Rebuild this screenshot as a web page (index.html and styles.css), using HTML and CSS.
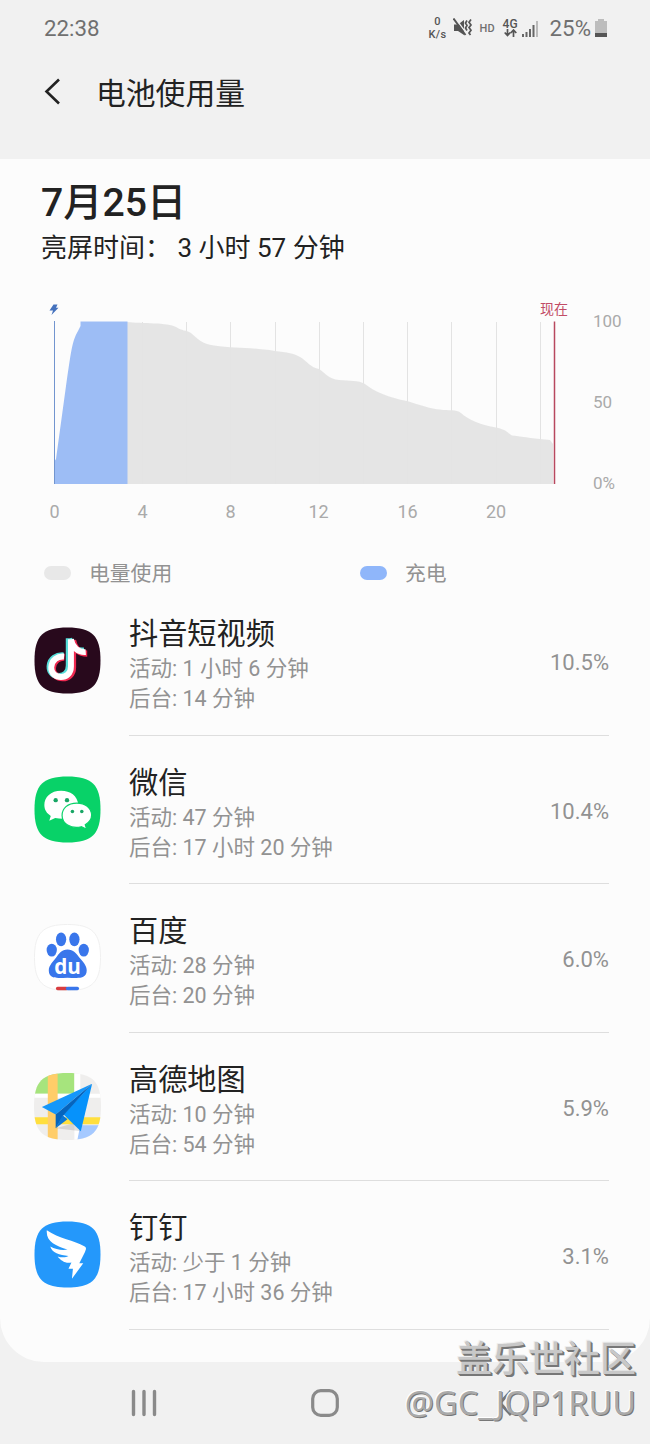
FILE: index.html
```html
<!DOCTYPE html>
<html lang="zh-CN">
<head>
<meta charset="utf-8">
<title>电池使用量</title>
<link rel="stylesheet" href="styles.css">
</head>
<body>
<div class="phone">
  <header class="statusbar">
    <span class="clock">22:38</span>
    <div class="indicators">
      <span class="speed"><b>0</b><b>K/s</b></span>
      <svg class="mute" width="20" height="20" viewBox="0 0 20 20">
        <path d="M1 6.500h4L11 2v15l-6-4H1z" fill="#555"/>
        <path d="M2.500 .5l11 15" stroke="#f1f1f1" stroke-width="1.300"/>
        <path d="M.5 .5l12 16.500" stroke="#555" stroke-width="1.900"/>
        <path d="M14 2.500l-1.500 2.500 1.500 2.500-1.500 2.500 1.500 2.500M18 1.500l-2 2.700 2 2.700-2 2.700 2 2.700-2 2.700 1.500 2" fill="none" stroke="#555" stroke-width="1.700"/>
      </svg>
      <span class="hd">HD</span>
      <span class="net"><b>4G</b>
        <svg width="13" height="8" viewBox="0 0 13 8"><path d="M3.500 0v6M.7 3.500l2.800 3 2.800-3M9.500 8V1.500M6.700 4l2.800-3 2.800 3" fill="none" stroke="#555" stroke-width="1.700"/></svg>
      </span>
      <svg class="signal" width="17" height="17" viewBox="0 0 17 17"><path d="M0 14h2v3H0zM3.500 12h2v5h-2zM7 9h2v8H7zM10.500 5h2v12h-2z" fill="#666"/><path d="M14 1h2v16h-2z" fill="#bbb"/></svg>
      <span class="level">25%</span>
      <svg class="battery" width="12" height="18" viewBox="0 0 12 18"><path d="M3 0h6v2h3v12H0V2h3z" fill="#bdbdbd"/><path d="M0 14h12v4H0z" fill="#555"/></svg>
    </div>
  </header>
  <div class="titlebar">
    <svg width="18" height="28" viewBox="0 0 18 28"><path d="M15 1.500L2.500 13.500l12.500 12" fill="none" stroke="#222" stroke-width="2.600"/></svg>
    <h1>电池使用量</h1>
  </div>
  <main class="sheet">
    <section class="summary">
      <h2>7月25日</h2>
      <p>亮屏时间： 3 小时 57 分钟</p>
    </section>
    <svg class="chart" width="650" height="240" viewBox="0 290 650 240">
      <path class="grid" d="M142.500 322V484M186.500 322V484M230.500 322V484M275.500 322V484M319.500 322V484M363.500 322V484M407.500 322V484M451.500 322V484M496.500 322V484M540.500 322V484"/>
      <path class="usage" d="M127 484V322C142 323.500 168 322.500 176 327C182 331 186 330 191 333C198 339 202 344 214 345.500C235 348.500 250 347 275 351C286 352 296 354 300 357C307 361 311 368 319 369C325 373 329 379 339 380C350 381 358 380 365 384C373 391 390 398 407 401C420 405 431 409 440 409.500C449 411 456 409 461 413C468 420 482 425 496 427.500C508 430 507 433 512 435.500C525 437 536 439 550 440L553 444V484z"/>
      <path class="charge" d="M54 484V462L56 459L66 386C71 352 72 341 78 331L80.500 326V321.500H127.500V484z"/>
      <path class="start" d="M54.500 321V484"/>
      <path class="current" d="M554.500 321.500V484"/>
      <path d="M53.500 304.500h4l-1.500 3.200h2.500L51.500 315l1.500-4.500h-3.500z" fill="#4572bd"/>
      <text class="now" x="554" y="313.500">现在</text>
      <g class="xaxis">
        <text x="54.500" y="518">0</text><text x="142.500" y="518">4</text><text x="230.500" y="518">8</text><text x="318.500" y="518">12</text><text x="407.500" y="518">16</text><text x="496" y="518">20</text>
      </g>
      <g class="yaxis">
        <text x="593" y="327">100</text><text x="593" y="408">50</text><text x="593" y="489">0%</text>
      </g>
    </svg>
    <div class="legend">
      <span class="key"><i class="pill"></i>电量使用</span>
      <span class="key"><i class="pill blue"></i>充电</span>
    </div>
    <ul class="apps">
      <li>
        <svg class="icon" viewBox="0 0 68 68">
          <path d="M34 0.500C59 .5 67.500 9 67.500 34S59 67.500 34 67.500 .5 59 .5 34 9 .5 34 .5z" fill="#28091c"/>
          <g fill="none" stroke-width="6.500">
            <path d="M35.500 11.500V39C35.500 54 15.500 52.500 16 40C16.500 32 23 28.500 30 29M35.500 11.500C37 20 43 25 51 24" stroke="#55ddd9"/>
            <path d="M39.500 13.500V41C39.500 56 18.500 54.500 19 42C19.500 34 26 30.500 31 31M39.500 13.500C41 22 46 27 54 27" stroke="#ef2950"/>
            <path d="M37.500 12.500V40C37.500 55 17 53.500 17.500 41C18 33 24 29.500 30.500 30M37.500 12.500C39 21 45 26 52.500 25.500" stroke="#fff" stroke-width="6"/>
          </g>
        </svg>
        <div class="info"><h3>抖音短视频</h3><p>活动: 1 小时 6 分钟</p><p>后台: 14 分钟</p></div><span class="pct">10.5%</span>
      </li>
      <li>
        <svg class="icon" viewBox="0 0 68 68">
          <path d="M34 0.500C59 .5 67.500 9 67.500 34S59 67.500 34 67.500 .5 59 .5 34 9 .5 34 .5z" fill="#08d268"/>
          <path d="M27.500 15C17 15 10.500 21.500 10.500 29.500C10.500 34.500 13 38 17 40.500L15.500 45.500L21.500 42.500C39 46 45.500 37 45 29C44 20 37 15 27.500 15z" fill="#fff"/>
          <path d="M43.500 27.500C34 27.500 28.500 33 28.500 40C28.500 48 37 54 48 51.500L53.500 54L52 49.500C56 47 58.500 44 58.500 39.500C58 32 52 27.500 43.500 27.500z" fill="#fff" stroke="#08d268" stroke-width="1.200"/>
          <g fill="#18a665"><circle cx="22" cy="24.500" r="2.200"/><circle cx="33.500" cy="24.500" r="2.200"/><circle cx="39" cy="36" r="1.800"/><circle cx="48.500" cy="36" r="1.800"/></g>
        </svg>
        <div class="info"><h3>微信</h3><p>活动: 47 分钟</p><p>后台: 17 小时 20 分钟</p></div><span class="pct">10.4%</span>
      </li>
      <li>
        <svg class="icon" viewBox="0 0 68 68">
          <path d="M34 0.500C59 .5 67.500 9 67.500 34S59 67.500 34 67.500 .5 59 .5 34 9 .5 34 .5z" fill="#fff" stroke="#f0f0f0"/>
          <g fill="#3976eb"><ellipse cx="18" cy="26.500" rx="5.200" ry="6.500"/><ellipse cx="27.500" cy="15.500" rx="5.200" ry="7"/><ellipse cx="41" cy="15.500" rx="5.200" ry="7"/><ellipse cx="50.500" cy="26.500" rx="5.200" ry="6.500"/>
          <path d="M34 26C40 26 43 30 46 34C49.500 38 53.500 42 53.500 47C53.500 57 43 54.500 34 54.500S15 57 15 47C15 42 19.500 38 22.500 34C25.500 30 28 26 34 26z"/></g>
          <text x="34" y="51" class="du">du</text>
          <path d="M24 65.500H33" stroke="#d83d40" stroke-width="3.500" stroke-linecap="round"/><path d="M34 65.500H44" stroke="#3976eb" stroke-width="3.500" stroke-linecap="round"/>
        </svg>
        <div class="info"><h3>百度</h3><p>活动: 28 分钟</p><p>后台: 20 分钟</p></div><span class="pct">6.0%</span>
      </li>
      <li>
        <svg class="icon" viewBox="0 0 68 68">
          <defs><clipPath id="tile"><path d="M34 0C59.500 0 68 8.500 68 34S59.500 68 34 68 0 59.500 0 34 8.500 0 34 0z"/></clipPath></defs>
          <g clip-path="url(#tile)">
            <path d="M0 0h68v68H0z" fill="#efeeed"/><path d="M0 0h41v21H0z" fill="#a6e47d"/>
            <path d="M41 0h6v68h-6zM0 21h68v4H0z" fill="#fff"/>
            <path d="M47 53h21v15H44z" fill="#a5c9ff"/>
            <path d="M0 45h68v7H0z" fill="#ffdf3e"/><path d="M14 0h10v68H14z" fill="#ffcd69"/>
            <path d="M22 56L44 50L48 59z" fill="#777" opacity=".22"/>
          </g>
          <path d="M59 11L8 34.500L22 42L59 11z" fill="#1597fa"/><path d="M59 11L30 42L47.500 59z" fill="#0692fb"/><path d="M59 11L22 42V56L30 43z" fill="#0564bd"/><path d="M22 56L34 47L29 43z" fill="#0876d6"/>
        </svg>
        <div class="info"><h3>高德地图</h3><p>活动: 10 分钟</p><p>后台: 54 分钟</p></div><span class="pct">5.9%</span>
      </li>
      <li>
        <svg class="icon" viewBox="0 0 68 68">
          <path d="M34 0.500C59 .5 67.500 9 67.500 34S59 67.500 34 67.500 .5 59 .5 34 9 .5 34 .5z" fill="#2498fb"/>
          <path d="M13 9.500C25 18 41 20 51 25.500C54 27 52.500 29 51.500 32L46 43H50L38.500 58.500L39.500 48.500H35L38 42C32 43.500 27 40 24 36C28 37.500 33 37 35 35.500C26 35 18 32 16.500 26C22 29.500 30 30 34 29C22 25 12 21 13 9.500z" fill="#fff"/>
        </svg>
        <div class="info"><h3>钉钉</h3><p>活动: 少于 1 分钟</p><p>后台: 17 小时 36 分钟</p></div><span class="pct">3.1%</span>
      </li>
    </ul>
  </main>
  <nav class="navbar">
    <svg width="28" height="28" viewBox="0 0 28 28"><path d="M3.500 2.500v23M14 2.500v23M24.500 2.500v23" stroke="#8a8a8a" stroke-width="3.400" stroke-linecap="round"/></svg>
    <svg width="28" height="28" viewBox="0 0 28 28"><rect x="1.700" y="1.700" width="24.600" height="24.600" rx="8" fill="none" stroke="#8a8a8a" stroke-width="3.200"/></svg>
    <svg width="28" height="28" viewBox="0 0 28 28"><path d="M20 2L9 14l11 12" fill="none" stroke="#777" stroke-width="3"/></svg>
  </nav>
  <div class="watermark"><span class="community">盖乐世社区</span><span class="author">@GC_JQP1RUU</span></div>
</div>
</body>
</html>
```
FILE: styles.css
```css
* { box-sizing: border-box; margin: 0; padding: 0; }
body { background: #f1f1f1; font-family: Roboto, "Noto Sans CJK SC", sans-serif; color: #222; }
svg { display: block; flex: none; }
.phone { position: relative; width: 650px; height: 1444px; overflow: hidden; display: flex; flex-direction: column; }
.statusbar { height: 56px; padding: 0 43px 0 44px; display: flex; align-items: center; justify-content: space-between; color: #707070; }
.clock, .level { font-size: 22.300px; line-height: 26px; }
.indicators { display: flex; align-items: center; }
.speed, .net { display: flex; flex-direction: column; align-items: center; font-size: 11px; line-height: 10px; color: #555; }
.speed b, .net b { font-weight: 500; }
.speed { font-size: 11px; line-height: 13px; letter-spacing: .4px; height: 24px; justify-content: center; }
.mute { margin-left: 6px; }
.hd { font-size: 11px; font-weight: 500; margin-left: 7px; }
.net { margin-left: 8px; font-size: 12px; }
.signal { margin: 0 11px 0 4px; }
.battery { margin-left: 4px; }
.titlebar { height: 103px; padding: 1px 45px 31px; display: flex; align-items: center; gap: 34px; }
.titlebar svg { margin: 0 0 2px -1px; }
.titlebar h1 { font-size: 29.800px; line-height: 40px; font-weight: 400; padding-top: 2px; }
.sheet { height: 1203px; background: #fcfcfc; border-radius: 0 0 44px 44px; display: flex; flex-direction: column; }
.summary { height: 131px; padding: 20px 41px 0; }
.summary h2 { font-size: 39.200px; line-height: 48px; font-weight: 500; }
.summary p { font-size: 26px; line-height: 42px; }
.usage { fill: #e4e4e4; fill-opacity: .96; }
.charge { fill: #9dbdf5; }
.grid { stroke: #e3e3e3; fill: none; }
.start { stroke: #7295cf; }
.current { stroke: #b8485f; stroke-width: 1.500; }
.now { font-size: 14px; fill: #c24c66; text-anchor: middle; }
.xaxis, .yaxis { font-size: 18px; fill: #aaa; }
.yaxis { font-size: 17px; }
.xaxis { text-anchor: middle; }
.legend { height: 57px; padding: 28px 44px 0; display: grid; grid-template-columns: 316px 1fr; font-size: 20.800px; line-height: 30px; color: #929292; }
.key { display: flex; align-items: center; gap: 18px; padding-top: 1px; }
.pill { width: 27px; height: 14px; border-radius: 7px; background: #e8e8e8; margin-bottom: 2px; }
.blue { background: #8fb6fa; }
.apps { list-style: none; }
.apps li { height: 148.500px; margin: 0 41px 0 34px; display: grid; grid-template-columns: 95px 1fr auto; }
.icon { width: 67px; height: 67px; margin-top: 40px; }
.info { grid-column: 2 / 3; padding-top: 27px; }
.info h3 { font-size: 29.200px; line-height: 40px; font-weight: 400; }
.info p { font-size: 21.500px; line-height: 30px; color: #929292; }
.pct { font-size: 22px; line-height: 30px; margin-top: 61px; color: #929292; }
.apps li::after { content: ""; grid-column: 2 / 4; height: 1px; background: #dedede; align-self: end; }
.du { font: 700 21px "Open Sans", sans-serif; fill: #fff; text-anchor: middle; }
.navbar { height: 82px; padding: 0 131px 0 130px; display: flex; justify-content: space-between; align-items: center; }
.watermark { position: absolute; right: 14px; bottom: 18px; display: flex; flex-direction: column; align-items: flex-end; }
.community { font: 500 36px/48px "Noto Sans CJK SC", sans-serif; color: #c8c8c8; text-shadow: 1px 1px 0 #777, 2px 2px 0 #777, -1px -1px 0 #eee; }
.author { font: 400 32.500px/46px "Noto Sans", sans-serif; color: #aaa; text-shadow: 1px 1px 0 #777, -1px -1px 0 #fff; }
```
